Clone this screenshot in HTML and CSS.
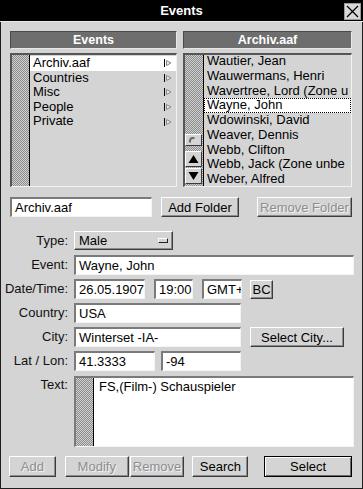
FILE: index.html
```html
<!DOCTYPE html>
<html>
<head>
<meta charset="utf-8">
<title>Events</title>
<link rel="stylesheet" href="styles.css">
</head>
<body>
<div class="window">
  <div class="titlebar">
    <span class="title">Events</span>
    <span class="close"><svg width="15" height="15" viewBox="0 0 15 15"><path d="M2 2L13 13M13 2L2 13" stroke="#000" stroke-width="1.3" fill="none"/></svg></span>
  </div>
  <div class="content">
    <div class="lists">
      <div class="panel panel-left">
        <div class="header">Events</div>
        <div class="listbox">
          <div class="stripe"></div>
          <ul class="items">
            <li class="item selected"><span>Archiv.aaf</span><svg class="arrow" width="8" height="8" viewBox="0 0 8 8"><path d="M0.5 0V8" stroke="#000"/><path d="M2.5 1.5L7 4L2.5 6.5Z" stroke="#8a8a8a" fill="#e8e8e8" stroke-width="1"/></svg></li>
            <li class="item"><span>Countries</span><svg class="arrow" width="8" height="8" viewBox="0 0 8 8"><path d="M0.5 0V8" stroke="#000"/><path d="M2.5 1.5L7 4L2.5 6.5Z" stroke="#8a8a8a" fill="#e8e8e8" stroke-width="1"/></svg></li>
            <li class="item"><span>Misc</span><svg class="arrow" width="8" height="8" viewBox="0 0 8 8"><path d="M0.5 0V8" stroke="#000"/><path d="M2.5 1.5L7 4L2.5 6.5Z" stroke="#8a8a8a" fill="#e8e8e8" stroke-width="1"/></svg></li>
            <li class="item"><span>People</span><svg class="arrow" width="8" height="8" viewBox="0 0 8 8"><path d="M0.5 0V8" stroke="#000"/><path d="M2.5 1.5L7 4L2.5 6.5Z" stroke="#8a8a8a" fill="#e8e8e8" stroke-width="1"/></svg></li>
            <li class="item"><span>Private</span><svg class="arrow" width="8" height="8" viewBox="0 0 8 8"><path d="M0.5 0V8" stroke="#000"/><path d="M2.5 1.5L7 4L2.5 6.5Z" stroke="#8a8a8a" fill="#e8e8e8" stroke-width="1"/></svg></li>
          </ul>
        </div>
      </div>
      <div class="panel panel-right">
        <div class="header">Archiv.aaf</div>
        <div class="listbox">
          <div class="stripe scroll">
            <div class="sbtn sbtn-thumb"><svg width="15" height="10" viewBox="0 0 15 10"><path d="M4 7.5V6A3 3 0 0 1 7 3H8.5" stroke="#6a6a6a" stroke-width="2" fill="none"/></svg></div>
            <div class="sbtn sbtn-arrow"><svg width="11" height="10" viewBox="0 0 11 10"><path d="M5.5 1L10.5 9H0.5Z" fill="#000"/></svg></div>
            <div class="sbtn sbtn-arrow"><svg width="11" height="10" viewBox="0 0 11 10"><path d="M0.5 1H10.5L5.5 9Z" fill="#000"/></svg></div>
          </div>
          <ul class="items names">
            <li class="row-item">Wautier, Jean</li>
            <li class="row-item">Wauwermans, Henri</li>
            <li class="row-item">Wavertree, Lord (Zone u</li>
            <li class="row-item current">Wayne, John</li>
            <li class="row-item">Wdowinski, David</li>
            <li class="row-item">Weaver, Dennis</li>
            <li class="row-item">Webb, Clifton</li>
            <li class="row-item">Webb, Jack (Zone unbe</li>
            <li class="row-item">Weber, Alfred</li>
          </ul>
        </div>
      </div>
    </div>

    <div class="folder-row">
      <div class="field folder-name">Archiv.aaf</div>
      <div class="btn add-folder">Add Folder</div>
      <div class="btn disabled remove-folder">Remove Folder</div>
    </div>

    <div class="form">
      <div class="label">Type:</div>
      <div class="line line-type"><div class="dropdown"><span>Male</span><span class="indicator"></span></div></div>

      <div class="label">Event:</div>
      <div class="line"><div class="field w-full">Wayne, John</div></div>

      <div class="label">Date/Time:</div>
      <div class="line">
        <div class="field w-date">26.05.1907</div>
        <div class="field w-time">19:00</div>
        <div class="field w-zone">GMT+</div>
        <div class="btn btn-bc">BC</div>
      </div>

      <div class="label">Country:</div>
      <div class="line"><div class="field w-mid">USA</div></div>

      <div class="label">City:</div>
      <div class="line">
        <div class="field w-mid">Winterset -IA-</div>
        <div class="btn btn-city">Select City...</div>
      </div>

      <div class="label">Lat / Lon:</div>
      <div class="line">
        <div class="field w-lat">41.3333</div>
        <div class="field w-lon">-94</div>
      </div>

      <div class="label label-text">Text:</div>
      <div class="line line-text">
        <div class="textarea">
          <div class="stripe"></div>
          <div class="textarea-body">FS,(Film-) Schauspieler</div>
        </div>
      </div>
    </div>

    <div class="actions">
      <div class="btn disabled b-add">Add</div>
      <div class="btn disabled b-modify">Modify</div>
      <div class="btn disabled b-remove">Remove</div>
      <div class="btn b-search">Search</div>
      <div class="btn b-select">Select</div>
    </div>
  </div>
</div>
</body>
</html>
```

FILE: styles.css
```css
* { box-sizing: border-box; margin: 0; padding: 0; }

html, body { width: 363px; height: 489px; overflow: hidden; }

body {
  background: #d4d4d4;
  font-family: "Liberation Sans", Arial, Helvetica, sans-serif;
  font-size: 13px;
  color: #000;
}

.window {
  width: 363px;
  height: 489px;
  display: flex;
  flex-direction: column;
  background: #d4d4d4;
  border: 1px solid #1e1e1e;
  border-top: 0;
}

.titlebar {
  flex: 0 0 22px;
  margin: 0 -1px;
  background: #000;
  color: #fff;
  font-weight: bold;
  font-size: 13px;
  display: flex;
  align-items: center;
  justify-content: center;
  position: relative;
  border-bottom: 1px solid #e8e8e8;
}

.close {
  position: absolute;
  right: 2px;
  top: 3px;
  width: 17px;
  height: 17px;
  background: #d8d8d8;
  border: 1px solid #9a9a9a;
  display: flex;
  align-items: center;
  justify-content: center;
}

.content {
  flex: 1;
  padding: 9px 10px 0 9px;
  display: flex;
  flex-direction: column;
}

/* lists */
.lists {
  display: flex;
  gap: 6px;
  height: 156px;
}

.panel {
  display: flex;
  flex-direction: column;
  gap: 4px;
}

.panel-left { width: 167px; }
.panel-right { flex: 1; }

.header {
  height: 18px;
  background: #6e6e6e;
  color: #fff;
  font-weight: bold;
  font-size: 12.5px;
  text-align: center;
  line-height: 16px;
  border: 1px solid;
  border-color: #4a4a4a #e8e8e8 #e8e8e8 #4a4a4a;
}

.listbox {
  flex: 1;
  display: flex;
  border-style: solid;
  border-width: 2px 1px 1px 2px;
  border-color: #555 #f2f2f2 #f2f2f2 #555;
  overflow: hidden;
}

.stripe {
  flex: 0 0 18px;
  background: repeating-conic-gradient(#8c8c8c 0 25%, #d0d0d0 0 50%) 0 0 / 2px 2px;
  border-right: 1px solid #000;
}

.panel-right .stripe { flex-basis: 19px; }

.items {
  list-style: none;
  flex: 1;
  min-width: 0;
  padding-top: 1px;
}

.items.names {
  padding-top: 0;
  margin-top: -1px;
}

.item {
  height: 14.6px;
  line-height: 14.6px;
  padding: 0 4px 0 3px;
  display: flex;
  align-items: center;
  justify-content: space-between;
  white-space: nowrap;
}

.item.selected { background: #fff; }

.arrow { flex: 0 0 auto; }

.row-item {
  height: 14.75px;
  line-height: 14.75px;
  padding-left: 3px;
  white-space: nowrap;
  overflow: hidden;
}

.row-item.current {
  background: #fff;
  outline: 1px dotted #000;
  outline-offset: -1px;
}

.scroll {
  display: flex;
  flex-direction: column;
  justify-content: flex-end;
  align-items: flex-start;
  padding-bottom: 2px;
}

.sbtn {
  width: 17px;
  background: #d4d4d4;
  border: 1px solid;
  border-color: #fff #3a3a3a #3a3a3a #fff;
  display: flex;
  align-items: center;
  justify-content: center;
}

.sbtn-thumb { height: 12px; margin-bottom: 4px; align-items: flex-start; justify-content: flex-start; }
.sbtn-arrow { height: 16px; margin-top: 1px; }

/* fields & buttons */
.field {
  height: 20px;
  background: #fff;
  border-style: solid;
  border-width: 2px 1px 1px 2px;
  border-color: #7a7a7a #f4f4f4 #f4f4f4 #7a7a7a;
  padding-left: 3px;
  line-height: 17px;
  white-space: nowrap;
  overflow: hidden;
}

.btn {
  height: 20px;
  background: #d4d4d4;
  border: 1px solid;
  border-color: #fff #3c3c3c #3c3c3c #fff;
  box-shadow: inset -1px -1px 0 #8c8c8c;
  display: flex;
  align-items: center;
  justify-content: center;
  white-space: nowrap;
}

.btn.disabled {
  color: #8e8e8e;
  text-shadow: 1px 1px 0 #f2f2f2;
}

.folder-row {
  display: flex;
  margin-top: 10px;
  height: 20px;
}

.folder-name { width: 142px; }
.add-folder { width: 78px; margin-left: 9px; }
.remove-folder { width: 95px; margin-left: 18px; }

/* form */
.form {
  margin-top: 14px;
  margin-left: -8px;
  display: grid;
  grid-template-columns: 66px 1fr;
  column-gap: 6px;
  row-gap: 4px;
}

.label {
  text-align: right;
  white-space: nowrap;
  line-height: 20px;
  color: #111;
}

.line {
  display: flex;
  align-items: center;
  height: 20px;
}

.line-type { height: 19px; }

.dropdown {
  width: 99px;
  height: 19px;
  background: #d4d4d4;
  border: 1px solid;
  border-color: #fff #3c3c3c #3c3c3c #fff;
  box-shadow: inset -1px -1px 0 #8c8c8c;
  display: flex;
  align-items: center;
  justify-content: space-between;
  padding: 0 4px 0 4px;
}

.indicator {
  width: 10px;
  height: 5px;
  background: #d4d4d4;
  border: 1px solid;
  border-color: #fff #222 #222 #fff;
}

.w-full { width: 280px; }
.w-date { width: 71px; }
.w-time { width: 39px; margin-left: 9px; }
.w-zone { width: 40px; margin-left: 9px; }
.btn-bc { width: 23px; height: 19px; margin-left: 8px; }
.w-mid { width: 167px; }
.btn-city { width: 94px; margin-left: 9px; }
.w-lat { width: 81px; }
.w-lon { width: 80px; margin-left: 6px; }

.label-text { align-self: start; line-height: 18px; margin-top: 1px; }

.line-text { height: 71px; margin-top: 1px; }

.textarea {
  width: 280px;
  height: 71px;
  display: flex;
  background: #fff;
  border-style: solid;
  border-width: 2px 1px 1px 2px;
  border-color: #7a7a7a #f4f4f4 #f4f4f4 #7a7a7a;
}

.textarea-body {
  padding: 1px 5px;
  line-height: 15px;
}

/* actions */
.actions {
  display: flex;
  margin-top: 9px;
  margin-left: -1px;
  height: 21px;
}

.actions .btn { height: 21px; }
.b-add { width: 47px; }
.b-modify { width: 64px; margin-left: 9px; }
.b-remove { width: 55px; margin-left: 1px; }
.b-search { width: 56px; margin-left: 8px; }
.b-select {
  width: 88px;
  margin-left: 16px;
  border-color: #000;
  box-shadow: inset 1px 1px 0 #fff, inset -1px -1px 0 #6a6a6a;
}
```
